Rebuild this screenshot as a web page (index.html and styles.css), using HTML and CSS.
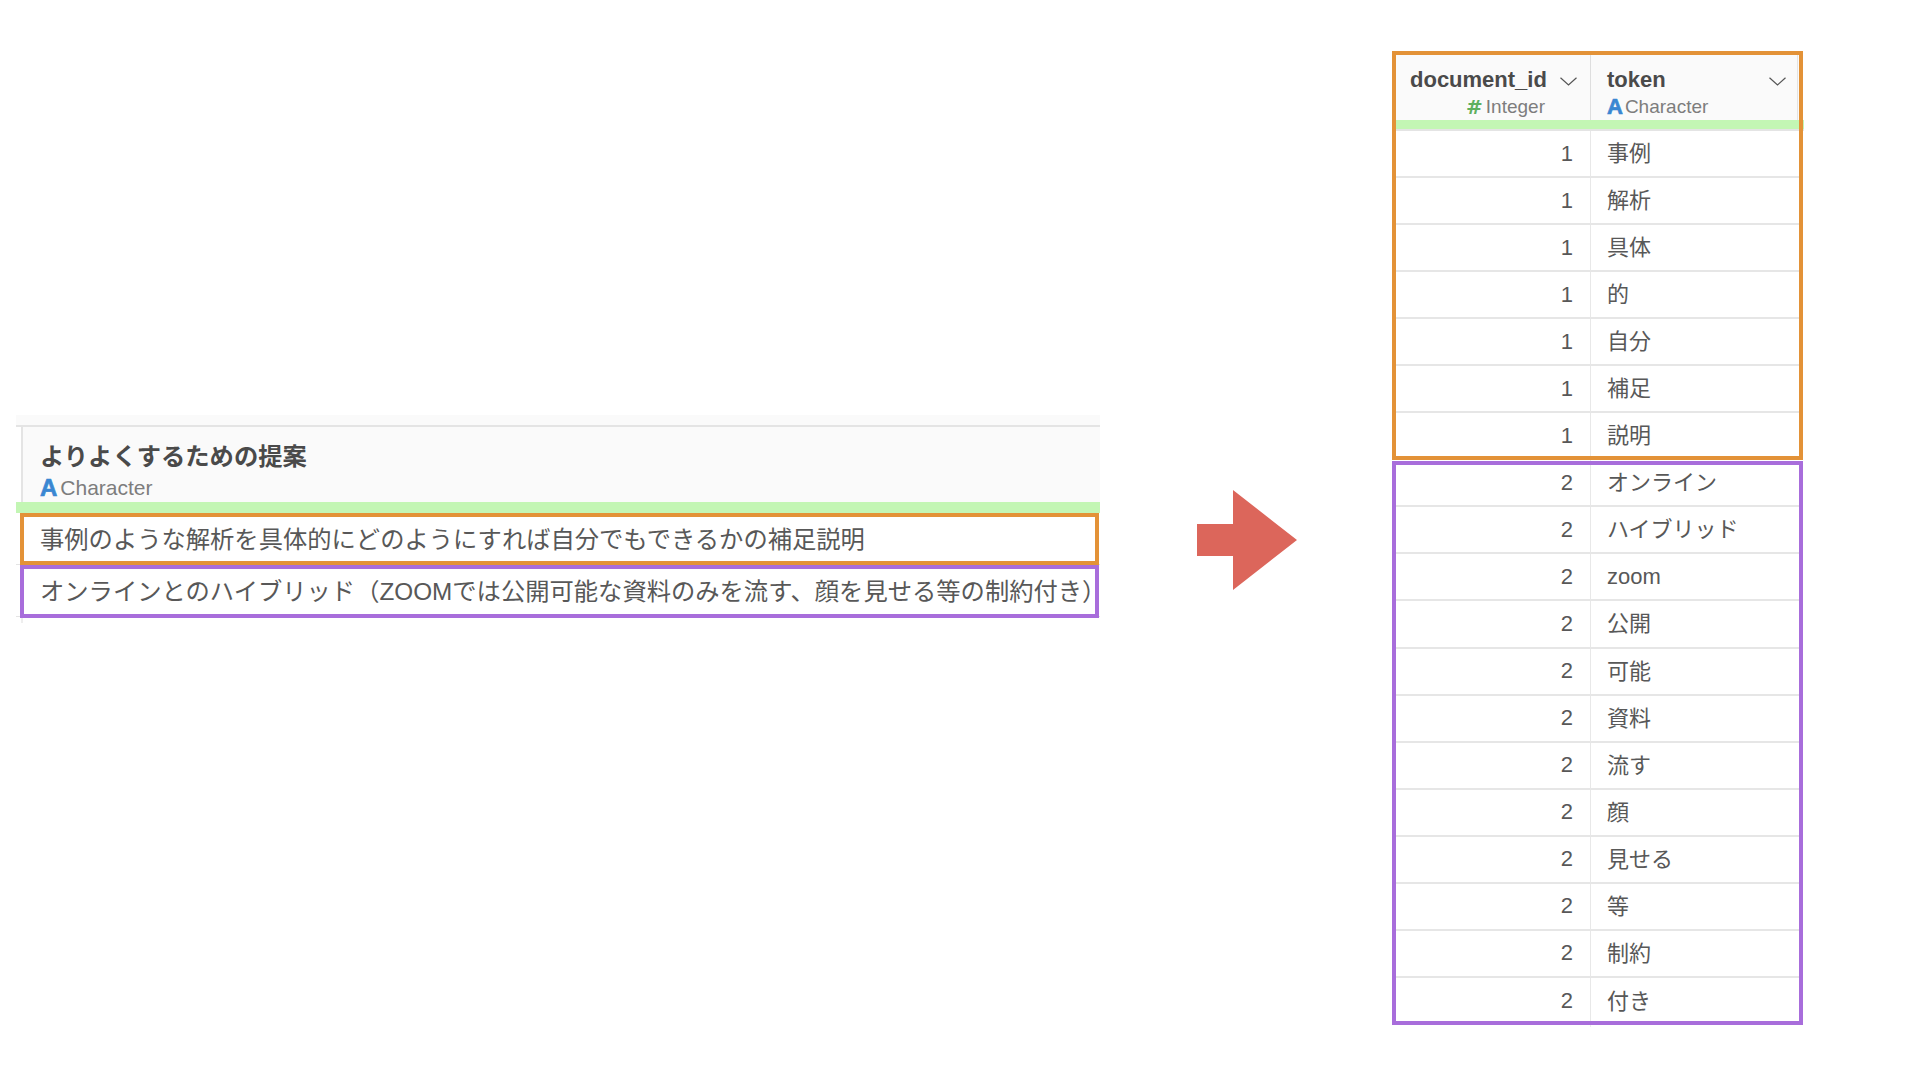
FILE: index.html
```
<!DOCTYPE html>
<html lang="ja">
<head>
<meta charset="utf-8">
<title>Tokenize</title>
<link rel="stylesheet" href="styles.css">
</head>
<body>
<main class="stage">
  <section class="source">
    <div class="source-strip"></div>
    <div class="source-head">
      <div class="source-title">よりよくするための提案</div>
      <div class="source-type"><span class="icon-a">A</span><span>Character</span></div>
    </div>
    <div class="green source-green"></div>
    <div class="source-row">事例のような解析を具体的にどのようにすれば自分でもできるかの補足説明</div>
    <div class="source-row">オンラインとのハイブリッド（ZOOMでは公開可能な資料のみを流す、顔を見せる等の制約付き）</div>
    <div class="source-tail"></div>
    <div class="box box-orange source-box-1"></div>
    <div class="box box-purple source-box-2"></div>
  </section>

  <svg class="arrow" width="100" height="100" viewBox="0 0 100 100" aria-hidden="true">
    <path d="M0 34H36V0L100 50L36 100V66H0Z" fill="#dc665b"/>
  </svg>

  <section class="result">
    <div class="result-head">
      <div class="hcell hcell-id">
        <div class="hname-row"><span class="hname">document_id</span><svg class="chev" width="17" height="9" viewBox="0 0 17 9"><path d="M0.5 0.7L8.5 8L16.5 0.7" fill="none" stroke="#555" stroke-width="1.2"/></svg></div>
        <div class="htype htype-id"><span class="icon-hash">#</span><span>Integer</span></div>
      </div>
      <div class="hcell hcell-token">
        <div class="hname-row"><span class="hname">token</span><svg class="chev" width="17" height="9" viewBox="0 0 17 9"><path d="M0.5 0.7L8.5 8L16.5 0.7" fill="none" stroke="#555" stroke-width="1.2"/></svg></div>
        <div class="htype"><span class="icon-a icon-a-small">A</span><span>Character</span></div>
      </div>
    </div>
    <div class="green result-green"></div>
    <div class="row"><div class="num">1</div><div class="tok">事例</div></div>
    <div class="row"><div class="num">1</div><div class="tok">解析</div></div>
    <div class="row"><div class="num">1</div><div class="tok">具体</div></div>
    <div class="row"><div class="num">1</div><div class="tok">的</div></div>
    <div class="row"><div class="num">1</div><div class="tok">自分</div></div>
    <div class="row"><div class="num">1</div><div class="tok">補足</div></div>
    <div class="row"><div class="num">1</div><div class="tok">説明</div></div>
    <div class="row"><div class="num">2</div><div class="tok">オンライン</div></div>
    <div class="row"><div class="num">2</div><div class="tok">ハイブリッド</div></div>
    <div class="row"><div class="num">2</div><div class="tok tok-latin">zoom</div></div>
    <div class="row"><div class="num">2</div><div class="tok">公開</div></div>
    <div class="row"><div class="num">2</div><div class="tok">可能</div></div>
    <div class="row"><div class="num">2</div><div class="tok">資料</div></div>
    <div class="row"><div class="num">2</div><div class="tok">流す</div></div>
    <div class="row"><div class="num">2</div><div class="tok">顔</div></div>
    <div class="row"><div class="num">2</div><div class="tok">見せる</div></div>
    <div class="row"><div class="num">2</div><div class="tok">等</div></div>
    <div class="row"><div class="num">2</div><div class="tok">制約</div></div>
    <div class="row row-last"><div class="num">2</div><div class="tok">付き</div></div>
    <div class="result-tail"></div>
    <div class="box box-orange result-box-1"></div>
    <div class="box box-purple result-box-2"></div>
  </section>
</main>
</body>
</html>
```

FILE: styles.css
```
* { box-sizing: border-box; }

html, body {
  margin: 0;
  padding: 0;
  background: #fff;
}

body {
  font-family: "Liberation Sans", "Noto Sans CJK JP", sans-serif;
  color: #585858;
}

.stage {
  display: flex;
  align-items: flex-start;
  width: 1920px;
  height: 1080px;
  padding-left: 16px;
  overflow: hidden;
}

.green { background: #c3f6b4; }

.box {
  position: absolute;
  border-style: solid;
  border-width: 4px;
  pointer-events: none;
}
.box-orange { border-color: #e39237; }
.box-purple { border-color: #a86ddb; }

/* Left: source table */
.source {
  position: relative;
  flex: none;
  width: 1084px;
  margin-top: 415px;
}

.source-strip {
  height: 12px;
  background: #fafafa;
  border-bottom: 2px solid #e4e4e4;
}

.source-head {
  height: 75px;
  margin-left: 5px;
  padding: 15px 0 0 17px;
  background: #fafafa;
  border-left: 2px solid #e4e4e4;
}

.source-title {
  font-size: 24.3px;
  line-height: 30px;
  font-weight: 700;
  color: #4a4a4a;
}

.source-type {
  display: flex;
  align-items: center;
  gap: 3px;
  margin-top: 3px;
  height: 26px;
  font-size: 21px;
  color: #7d7d7d;
}

.icon-a {
  font-size: 24px;
  font-weight: 700;
  color: #3a87d2;
  line-height: 1;
  -webkit-text-stroke: 0.7px #3a87d2;
}
.icon-a-small { font-size: 22px; }

.icon-hash {
  font-family: "DejaVu Sans", sans-serif;
  font-size: 20px;
  font-weight: 700;
  color: #5fb05f;
  line-height: 1;
}

.source-green { height: 11px; }

.source-row {
  display: flex;
  align-items: center;
  height: 52px;
  padding: 0 0 2px 24px;
  font-size: 24.3px;
  white-space: nowrap;
  border-bottom: 1px solid #e4e4e4;
}

.source-tail {
  height: 6px;
  margin-left: 5px;
  border-left: 2px solid #eee;
}

.source-box-1 { left: 4px; top: 98px; width: 1079px; height: 52px; }
.source-box-2 { left: 4px; top: 150px; width: 1079px; height: 53px; }

/* Arrow */
.arrow {
  flex: none;
  margin-left: 97px;
  margin-top: 490px;
}

/* Right: result table */
.result {
  position: relative;
  flex: none;
  width: 411px;
  margin-left: 95px;
  margin-top: 51px;
}

.result-head {
  display: flex;
  height: 69px;
  background: #fafafa;
}

.hcell {
  padding-top: 15px;
}
.hcell-id {
  width: 199px;
  padding-left: 18px;
  padding-right: 13px;
  border-right: 1px solid #dedede;
}
.hcell-token {
  width: 207px;
  padding-left: 16px;
  padding-right: 11px;
  border-right: 1px solid #e4e4e4;
}

.hname-row {
  display: flex;
  align-items: center;
  justify-content: space-between;
  height: 28px;
}

.hname {
  font-size: 22px;
  font-weight: 700;
  color: #4a4a4a;
}

.chev { display: block; margin-top: 2px; }

.htype {
  display: flex;
  align-items: center;
  gap: 2px;
  height: 24px;
  margin-top: 1px;
  font-size: 19px;
  color: #7d7d7d;
}
.htype-id {
  justify-content: flex-end;
  gap: 3px;
  padding-right: 32px;
}

.result-green {
  height: 11px;
  margin-right: -1px;
  border-bottom: 2px solid #e4e4e4;
}

.row {
  display: flex;
  height: 47.05px;
  font-size: 22px;
}

.num, .tok {
  display: flex;
  align-items: center;
  border-bottom: 2px solid #e6e6e6;
}

.num {
  justify-content: flex-end;
  width: 199px;
  padding-right: 17px;
  border-right: 1px solid #e8e8e8;
}

.tok {
  width: 212px;
  padding: 0 0 5px 16px;
  white-space: nowrap;
}
.tok-latin { padding: 1px 0 0 16px; }

.row-last .num,
.row-last .tok { border-bottom: 0; }

.result-tail {
  height: 2px;
  width: 199px;
  border-right: 1px solid #eee;
}

.result-box-1 { left: 0; top: 0; width: 411px; height: 409px; }
.result-box-2 { left: 0; top: 410px; width: 411px; height: 564px; }
```
